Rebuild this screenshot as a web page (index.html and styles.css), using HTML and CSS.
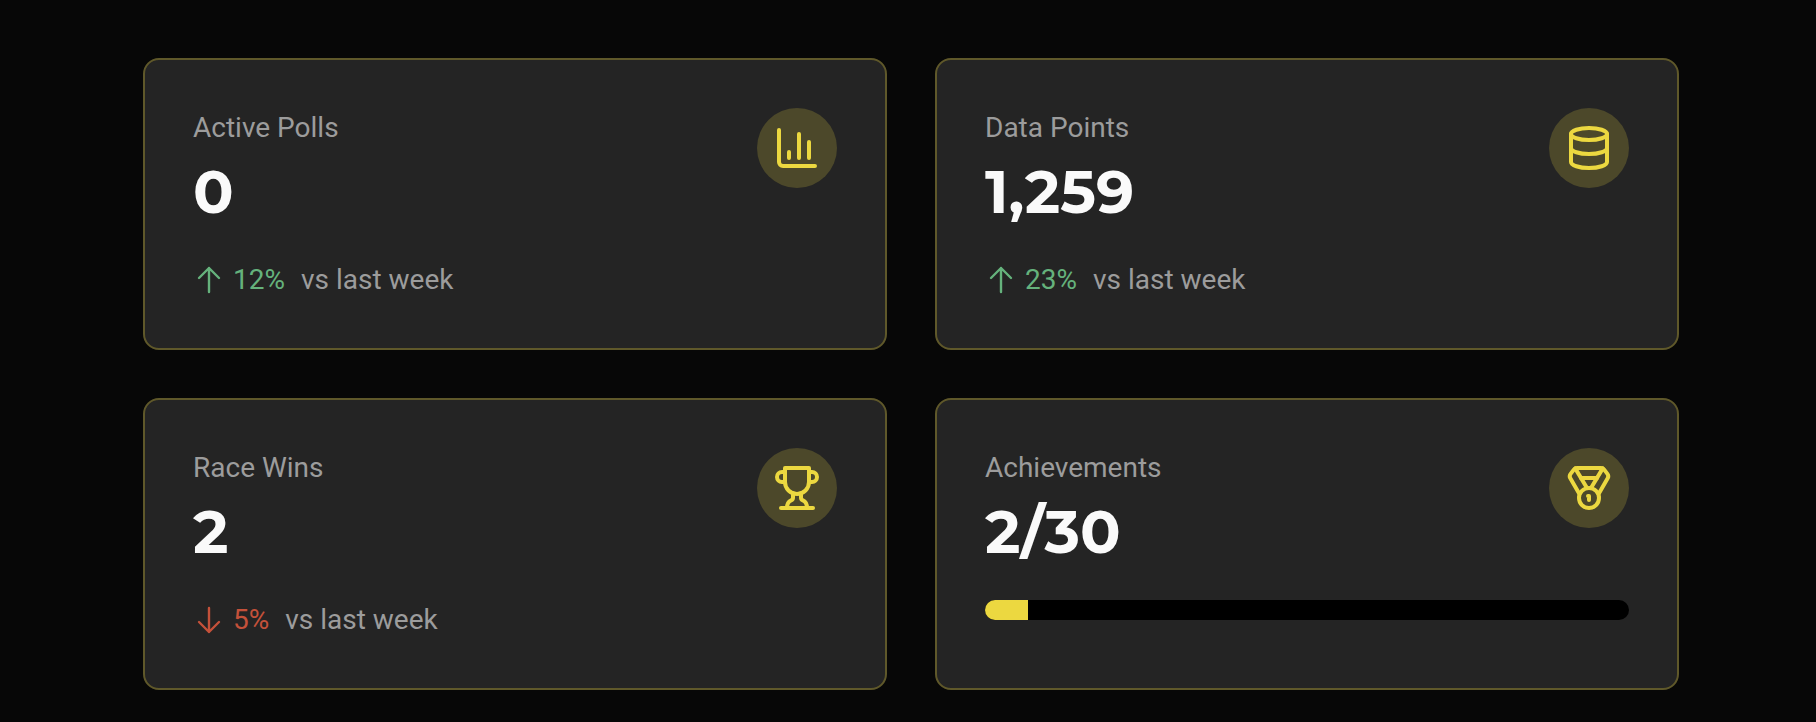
FILE: index.html
```html
<!DOCTYPE html>
<html lang="en">
<head>
<meta charset="utf-8">
<meta name="viewport" content="width=device-width, initial-scale=1">
<title>Dashboard stats</title>
<link rel="stylesheet" href="styles.css">
</head>
<body>
<main class="stats">
  <section class="card">
    <div class="card-head">
      <div>
        <h2 class="label">Active Polls</h2>
        <p class="value">0</p>
      </div>
      <span class="badge">
        <svg class="icon" viewBox="0 0 24 24" aria-hidden="true"><path d="M3 3v16a2 2 0 0 0 2 2h16"/><path d="M8 17v-3"/><path d="M13 17V5"/><path d="M18 17V9"/></svg>
      </span>
    </div>
    <div class="trend">
      <span class="change up"><svg class="arrow" viewBox="0 0 24 24" aria-hidden="true"><path d="M4.5 10.5 12 3m0 0 7.5 7.5M12 3v18"/></svg>12%</span>
      <span class="period">vs last week</span>
    </div>
  </section>

  <section class="card">
    <div class="card-head">
      <div>
        <h2 class="label">Data Points</h2>
        <p class="value">1,259</p>
      </div>
      <span class="badge">
        <svg class="icon" viewBox="0 0 24 24" aria-hidden="true"><ellipse cx="12" cy="5" rx="9" ry="3"/><path d="M3 5v14a9 3 0 0 0 18 0V5"/><path d="M3 12a9 3 0 0 0 18 0"/></svg>
      </span>
    </div>
    <div class="trend">
      <span class="change up"><svg class="arrow" viewBox="0 0 24 24" aria-hidden="true"><path d="M4.5 10.5 12 3m0 0 7.5 7.5M12 3v18"/></svg>23%</span>
      <span class="period">vs last week</span>
    </div>
  </section>

  <section class="card">
    <div class="card-head">
      <div>
        <h2 class="label">Race Wins</h2>
        <p class="value">2</p>
      </div>
      <span class="badge">
        <svg class="icon" viewBox="0 0 24 24" aria-hidden="true"><path d="M6 9H4.5a2.5 2.5 0 0 1 0-5H6"/><path d="M18 9h1.5a2.5 2.5 0 0 0 0-5H18"/><path d="M4 22h16"/><path d="M10 14.66V17c0 .55-.47.98-.97 1.21C7.85 18.75 7 20.24 7 22"/><path d="M14 14.66V17c0 .55.47.98.97 1.21C16.15 18.75 17 20.24 17 22"/><path d="M18 2H6v7a6 6 0 0 0 12 0V2Z"/></svg>
      </span>
    </div>
    <div class="trend">
      <span class="change down"><svg class="arrow" viewBox="0 0 24 24" aria-hidden="true"><path d="M19.5 13.5 12 21m0 0-7.5-7.5M12 21V3"/></svg>5%</span>
      <span class="period">vs last week</span>
    </div>
  </section>

  <section class="card">
    <div class="card-head">
      <div>
        <h2 class="label">Achievements</h2>
        <p class="value">2/30</p>
      </div>
      <span class="badge">
        <svg class="icon" viewBox="0 0 24 24" aria-hidden="true"><path d="M7.21 15 2.66 7.14a2 2 0 0 1 .13-2.2L4.4 2.8A2 2 0 0 1 6 2h12a2 2 0 0 1 1.6.8l1.6 2.14a2 2 0 0 1 .14 2.2L16.79 15"/><path d="M11 12 5.12 2.2"/><path d="m13 12 5.88-9.8"/><path d="M8 7h8"/><circle cx="12" cy="17" r="5"/><path d="M12 18v-2h-.5"/></svg>
      </span>
    </div>
    <div class="progress" role="progressbar" aria-label="Achievements" aria-valuemin="0" aria-valuemax="30" aria-valuenow="2">
      <div class="progress-fill" style="width: 6.667%"></div>
    </div>
  </section>
</main>
</body>
</html>
```
FILE: styles.css
```css
* {
  box-sizing: border-box;
}

body {
  margin: 0;
  background: #070707;
  color: #fafafa;
  font-family: Roboto, "Liberation Sans", sans-serif;
  font-size: 28px;
  line-height: 40px;
}

.stats {
  display: grid;
  grid-template-columns: repeat(2, minmax(0, 1fr));
  gap: 48px;
  padding: 58px 137px 32px 143px;
}

.card {
  padding: 48px;
  border: 2px solid #5f582a;
  border-radius: 16px;
  background: #242424;
}

.card-head {
  display: flex;
  align-items: flex-start;
  justify-content: space-between;
  margin-bottom: 32px;
}

.label {
  margin: 0 0 8px;
  color: #9c9c9c;
  font-size: 28px;
  font-weight: 400;
}

.value {
  margin: 0;
  font-family: Montserrat, Lato, sans-serif;
  font-size: 60px;
  font-weight: 700;
  line-height: 72px;
}

.badge {
  display: flex;
  flex: none;
  align-items: center;
  justify-content: center;
  width: 80px;
  height: 80px;
  border-radius: 50%;
  background: #4c482a;
  color: #ecd840;
}

.icon,
.arrow {
  display: block;
  fill: none;
  stroke: currentColor;
  stroke-linecap: round;
  stroke-linejoin: round;
}

.icon {
  width: 48px;
  height: 48px;
  stroke-width: 2;
}

.arrow {
  width: 32px;
  height: 32px;
  stroke-width: 1.8;
}

.trend {
  display: flex;
  align-items: center;
  gap: 16px;
}

.change {
  display: flex;
  align-items: center;
  gap: 8px;
}

.up {
  color: #65b27c;
}

.down {
  color: #c4513a;
}

.period {
  color: #9c9c9c;
}

.progress {
  height: 20px;
  overflow: hidden;
  border-radius: 10px;
  background: #000;
}

.progress-fill {
  height: 100%;
  background: #ecd840;
}
```
